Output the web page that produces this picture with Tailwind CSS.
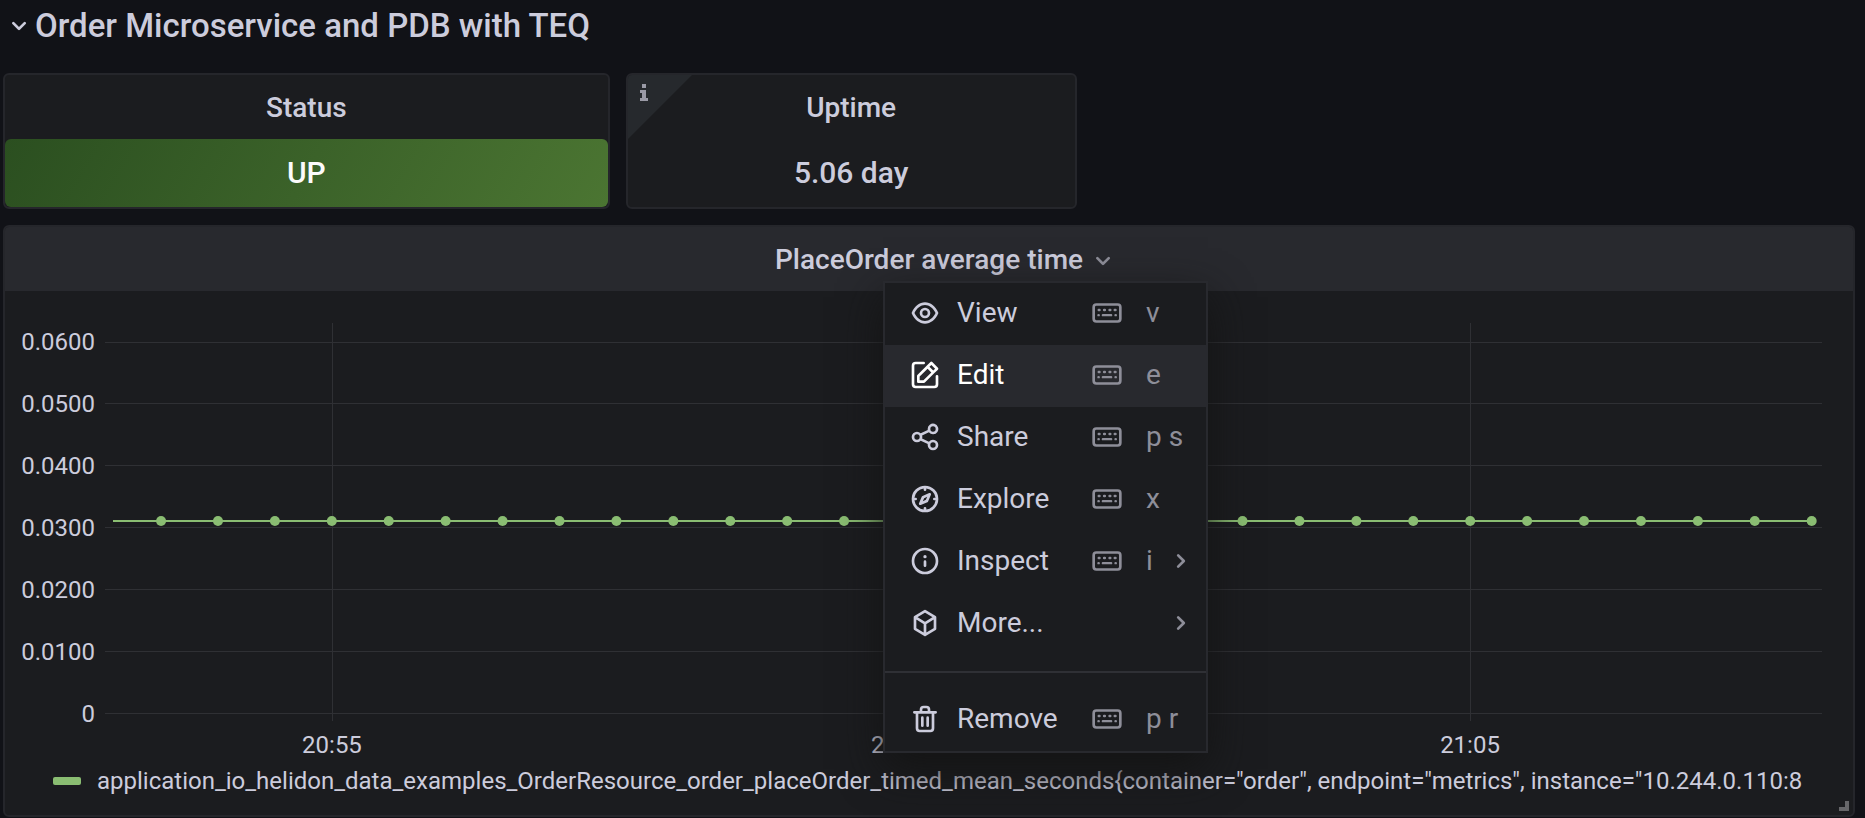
<!DOCTYPE html>
<html lang="en">
<head>
<meta charset="utf-8">
<meta name="viewport" content="width=device-width, initial-scale=1">
<title>Order Microservice and PDB with TEQ</title>
<script src="https://cdn.jsdelivr.net/npm/@tailwindcss/browser@4"></script>
</head>
<body class="min-h-screen overflow-hidden bg-[#111217] font-['Roboto',sans-serif] text-[#ccccdc]">
<svg class="hidden" aria-hidden="true">
  <symbol id="down" viewBox="0 0 24 24"><path d="M17,9.17a1,1,0,0,0-1.41,0L12,12.71,8.46,9.17a1,1,0,0,0-1.41,0,1,1,0,0,0,0,1.42l4.24,4.24a1,1,0,0,0,1.42,0L17,10.59A1,1,0,0,0,17,9.17Z"/></symbol>
  <symbol id="right" viewBox="0 0 24 24"><path d="M14.83,11.29,10.59,7.05a1,1,0,0,0-1.42,0,1,1,0,0,0,0,1.41L12.71,12,9.17,15.54a1,1,0,0,0,0,1.41,1,1,0,0,0,.71.29,1,1,0,0,0,.71-.29l4.24-4.24A1,1,0,0,0,14.83,11.29Z"/></symbol>
  <symbol id="eye" viewBox="0 0 24 24"><path d="M21.92,11.6C19.9,6.91,16.1,4,12,4S4.1,6.91,2.08,11.6a1,1,0,0,0,0,.8C4.1,17.09,7.9,20,12,20s7.9-2.91,9.92-7.6A1,1,0,0,0,21.92,11.6ZM12,18c-3.17,0-6.17-2.29-7.9-6C5.83,8.29,8.83,6,12,6s6.17,2.29,7.9,6C18.17,15.71,15.17,18,12,18ZM12,8a4,4,0,1,0,4,4A4,4,0,0,0,12,8Zm0,6a2,2,0,1,1,2-2A2,2,0,0,1,12,14Z"/></symbol>
  <symbol id="edit" viewBox="0 0 24 24"><path d="M21,12a1,1,0,0,0-1,1v6a1,1,0,0,1-1,1H5a1,1,0,0,1-1-1V5A1,1,0,0,1,5,4h6a1,1,0,0,0,0-2H5A3,3,0,0,0,2,5V19a3,3,0,0,0,3,3H19a3,3,0,0,0,3-3V13A1,1,0,0,0,21,12ZM6,12.76V17a1,1,0,0,0,1,1h4.24a1,1,0,0,0,.71-.29l6.92-6.93h0L21.71,8a1,1,0,0,0,0-1.42L17.47,2.29a1,1,0,0,0-1.42,0L13.23,5.12h0L6.29,12.05A1,1,0,0,0,6,12.76ZM16.76,4.41l2.83,2.83L18.17,8.66,15.34,5.83ZM8,13.17l5.93-5.93,2.83,2.83L10.83,16H8Z"/></symbol>
  <symbol id="share" viewBox="0 0 24 24"><path d="M18,14a4,4,0,0,0-3.08,1.48l-5.1-2.35a3.64,3.64,0,0,0,0-2.26l5.1-2.35A4,4,0,1,0,14,6a4.17,4.17,0,0,0,.07.71L8.79,9.14a4,4,0,1,0,0,5.72l5.28,2.43A4.17,4.17,0,0,0,14,18a4,4,0,1,0,4-4ZM18,4a2,2,0,1,1-2,2A2,2,0,0,1,18,4ZM6,14a2,2,0,1,1,2-2A2,2,0,0,1,6,14Zm12,6a2,2,0,1,1,2-2A2,2,0,0,1,18,20Z"/></symbol>
  <symbol id="compass" viewBox="0 0 24 24"><path d="M12,2A10,10,0,1,0,22,12,10,10,0,0,0,12,2Zm1,17.93V19a1,1,0,0,0-2,0v.93A8,8,0,0,1,4.07,13H5a1,1,0,0,0,0-2H4.07A8,8,0,0,1,11,4.07V5a1,1,0,0,0,2,0V4.07A8,8,0,0,1,19.93,11H19a1,1,0,0,0,0,2h.93A8,8,0,0,1,13,19.93ZM15.14,7.55l-5,2.12a1,1,0,0,0-.52.52l-2.12,5a1,1,0,0,0,.21,1.1,1,1,0,0,0,.7.29.93.93,0,0,0,.4-.08l5-2.12a1,1,0,0,0,.52-.52l2.12-5a1,1,0,0,0-1.31-1.31Zm-2.49,5.1-2.28,1,1-2.28,2.28-1Z"/></symbol>
  <symbol id="info" viewBox="0 0 24 24"><path d="M12,2A10,10,0,1,0,22,12,10,10,0,0,0,12,2Zm0,18a8,8,0,1,1,8-8A8,8,0,0,1,12,20Zm0-8.5a1,1,0,0,0-1,1v3a1,1,0,0,0,2,0v-3A1,1,0,0,0,12,11.5Zm0-4a1.25,1.25,0,1,0,1.25,1.25A1.25,1.25,0,0,0,12,7.5Z"/></symbol>
  <symbol id="cube" viewBox="0 0 24 24"><path fill="none" stroke="currentColor" stroke-width="2" stroke-linejoin="round" d="M12 3.1 19.5 7.6v8.8L12 20.9 4.5 16.4V7.6ZM4.5 7.6 12 12.2l7.5-4.6M12 12.2v8.7"/></symbol>
  <symbol id="trash" viewBox="0 0 24 24"><path d="M10,18a1,1,0,0,0,1-1V11a1,1,0,0,0-2,0v6A1,1,0,0,0,10,18ZM20,6H16V5a3,3,0,0,0-3-3H11A3,3,0,0,0,8,5V6H4A1,1,0,0,0,4,8H5V19a3,3,0,0,0,3,3h8a3,3,0,0,0,3-3V8h1a1,1,0,0,0,0-2ZM10,5a1,1,0,0,1,1-1h2a1,1,0,0,1,1,1V6H10Zm7,14a1,1,0,0,1-1,1H8a1,1,0,0,1-1-1V8H17Zm-3-1a1,1,0,0,0,1-1V11a1,1,0,0,0-2,0v6A1,1,0,0,0,14,18Z"/></symbol>
  <symbol id="keyboard" viewBox="0 0 24 24"><g fill="none" stroke="currentColor" stroke-linecap="round"><rect x="2" y="5.6" width="20" height="12.8" rx="2" stroke-width="2"/><path stroke-width="1.8" d="M5.8 9.8h.6M9.8 9.8h.6M13.9 9.8h.6M17.8 9.8h.6M5.6 13.6h.2M8.9 13.6h6.2M18.4 13.6h.2"/></g></symbol>
</svg>

<main class="flex flex-col pr-[10px] pl-[3px]">
  <h1 class="flex h-[73px] items-start pt-1">
    <button type="button" class="flex items-center text-[33px] leading-11 font-medium"><svg class="size-8 fill-current" aria-hidden="true"><use href="#down"/></svg>Order Microservice and PDB with TEQ</button>
  </h1>

  <div class="grid grid-cols-24 gap-4">
    <section class="col-span-8 flex h-[136px] flex-col rounded-md border-2 border-[#25262b] bg-[#1b1c1f] text-center">
      <h2 class="h-16 text-[28px] leading-[66px] font-medium">Status</h2>
      <p class="flex-1 rounded-md bg-linear-[120deg] from-[#2b4f20] to-[#4b7532] text-[30px] leading-[68px] font-medium text-[#fbfbfb]">UP</p>
    </section>
    <section class="relative col-span-6 flex h-[136px] flex-col rounded-md border-2 border-[#25262b] bg-[#1b1c1f] text-center">
      <svg class="absolute top-0 left-0 size-16" viewBox="0 0 64 64" aria-hidden="true"><path fill="#26292d" d="M4 0H64L0 64V4Q0 0 4 0Z"/><path fill="#9a9aa6" d="M14 9h4v4h-4zM12 15h6v8h2v3h-8v-3h2v-5h-2z"/></svg>
      <h2 class="h-16 text-[28px] leading-[66px] font-medium">Uptime</h2>
      <p class="flex-1 text-[30px] leading-[68px] font-medium">5.06 day</p>
    </section>

    <section class="relative col-span-24 flex flex-col rounded-md border-2 border-[#25262b] bg-[#1b1c1f]">
      <header class="relative flex h-16 justify-center rounded-t bg-[#28292e]">
        <button type="button" aria-haspopup="menu" aria-expanded="true" class="relative text-[28px] leading-[66px] font-medium">PlaceOrder average time<svg class="absolute top-[18px] left-full ml-1 size-8 fill-[#8e8e99]" aria-hidden="true"><use href="#down"/></svg></button>

        <div role="menu" class="absolute top-[54px] left-1/2 z-10 -ml-[46px] w-[325px] border-2 border-[#28292e] bg-[#1b1c1f] text-[28px] shadow-[0_16px_40px_#141414]">
          <button type="button" role="menuitem" class="flex h-[62px] w-full items-center pr-[9px] pb-0.5 pl-6"><svg class="mr-4 size-8 fill-current"><use href="#eye"/></svg><span class="w-[134px] text-left">View</span><svg class="mr-[23px] size-8 text-[#8e8e99]"><use href="#keyboard"/></svg><span class="text-[#8e8e99]">v</span></button>
          <button type="button" role="menuitem" class="flex h-[62px] w-full items-center bg-[#28292e] pr-[9px] pb-0.5 pl-6 text-white"><svg class="mr-4 size-8 fill-current"><use href="#edit"/></svg><span class="w-[134px] text-left">Edit</span><svg class="mr-[23px] size-8 text-[#8e8e99]"><use href="#keyboard"/></svg><span class="text-[#8e8e99]">e</span></button>
          <button type="button" role="menuitem" class="flex h-[62px] w-full items-center pr-[9px] pb-0.5 pl-6"><svg class="mr-4 size-8 fill-current"><use href="#share"/></svg><span class="w-[134px] text-left">Share</span><svg class="mr-[23px] size-8 text-[#8e8e99]"><use href="#keyboard"/></svg><span class="text-[#8e8e99]">p s</span></button>
          <button type="button" role="menuitem" class="flex h-[62px] w-full items-center pr-[9px] pb-0.5 pl-6"><svg class="mr-4 size-8 fill-current"><use href="#compass"/></svg><span class="w-[134px] text-left">Explore</span><svg class="mr-[23px] size-8 text-[#8e8e99]"><use href="#keyboard"/></svg><span class="text-[#8e8e99]">x</span></button>
          <button type="button" role="menuitem" aria-haspopup="menu" class="flex h-[62px] w-full items-center pr-[9px] pb-0.5 pl-6"><svg class="mr-4 size-8 fill-current"><use href="#info"/></svg><span class="w-[134px] text-left">Inspect</span><svg class="mr-[23px] size-8 text-[#8e8e99]"><use href="#keyboard"/></svg><span class="text-[#8e8e99]">i</span><svg class="ml-auto size-8 fill-[#8e8e99]"><use href="#right"/></svg></button>
          <button type="button" role="menuitem" aria-haspopup="menu" class="flex h-[62px] w-full items-center pr-[9px] pb-0.5 pl-6"><svg class="mr-4 size-8 fill-current"><use href="#cube"/></svg><span class="w-[134px] text-left">More...</span><svg class="ml-auto size-8 fill-[#8e8e99]"><use href="#right"/></svg></button>
          <hr class="my-4 border-t-2 border-[#2f3035]">
          <button type="button" role="menuitem" class="flex h-[62px] w-full items-center pr-[9px] pb-0.5 pl-6"><svg class="mr-4 size-8 fill-current"><use href="#trash"/></svg><span class="w-[134px] text-left">Remove</span><svg class="mr-[23px] size-8 text-[#8e8e99]"><use href="#keyboard"/></svg><span class="text-[#8e8e99]">p r</span></button>
        </div>
      </header>

      <div class="flex pt-[30px] pr-[31px] text-[24px]">
        <div class="mt-[6px] flex h-[402px] w-[100px] flex-col justify-between pr-[10px] text-right leading-[30px]">
          <span>0.0600</span><span>0.0500</span><span>0.0400</span><span>0.0300</span><span>0.0200</span><span>0.0100</span><span>0</span>
        </div>
        <svg class="h-[440px] flex-1" role="img" aria-label="PlaceOrder average time, about 0.031 throughout">
          <g stroke="#2f3034" shape-rendering="crispEdges">
            <path d="M0 21.5h9999M0 82.5h9999M0 144.5h9999M0 206.5h9999M0 268.5h9999M0 330.5h9999M0 392.5h9999"/>
            <line x1="13.25%" x2="13.25%" y1="2" y2="400"/>
            <line x1="46.4%" x2="46.4%" y1="2" y2="400"/>
            <line x1="79.53%" x2="79.53%" y1="2" y2="400"/>
          </g>
          <line x1="8" x2="99.4%" y1="200" y2="200" stroke="#8abd72" stroke-width="2"/>
          <g id="points" fill="#8abd72"></g>
          <g fill="#ccccdc" text-anchor="middle">
            <text x="13.22%" y="432">20:55</text>
            <text x="46.36%" y="432">21:00</text>
            <text x="79.5%" y="432">21:05</text>
          </g>
        </svg>
      </div>

      <div class="mt-0.5 mb-4 flex h-9 items-center gap-4 pr-4 pl-12 text-[24px]">
        <span class="h-2 w-7 shrink-0 rounded-xs bg-[#8abd72]"></span>
        <button type="button" class="min-w-0 flex-1 overflow-hidden text-left whitespace-nowrap">application_io_helidon_data_examples_OrderResource_order_placeOrder_timed_mean_seconds{container="order", endpoint="metrics", instance="10.244.0.110:8</button>
      </div>
      <span class="absolute right-1 bottom-1 size-[10px] border-r-4 border-b-4 border-[#666669]"></span>
    </section>
  </div>
</main>
<script>
  // One sample every 30 seconds; the last one sits at 99.4% of the plot width.
  const points = document.getElementById('points');
  for (let k = 0; k < 30; k++) {
    const dot = document.createElementNS('http://www.w3.org/2000/svg', 'circle');
    dot.setAttribute('cx', (99.4 - k * 3.315) + '%');
    dot.setAttribute('cy', 200);
    dot.setAttribute('r', 5);
    points.append(dot);
  }
</script>
</body>
</html>
